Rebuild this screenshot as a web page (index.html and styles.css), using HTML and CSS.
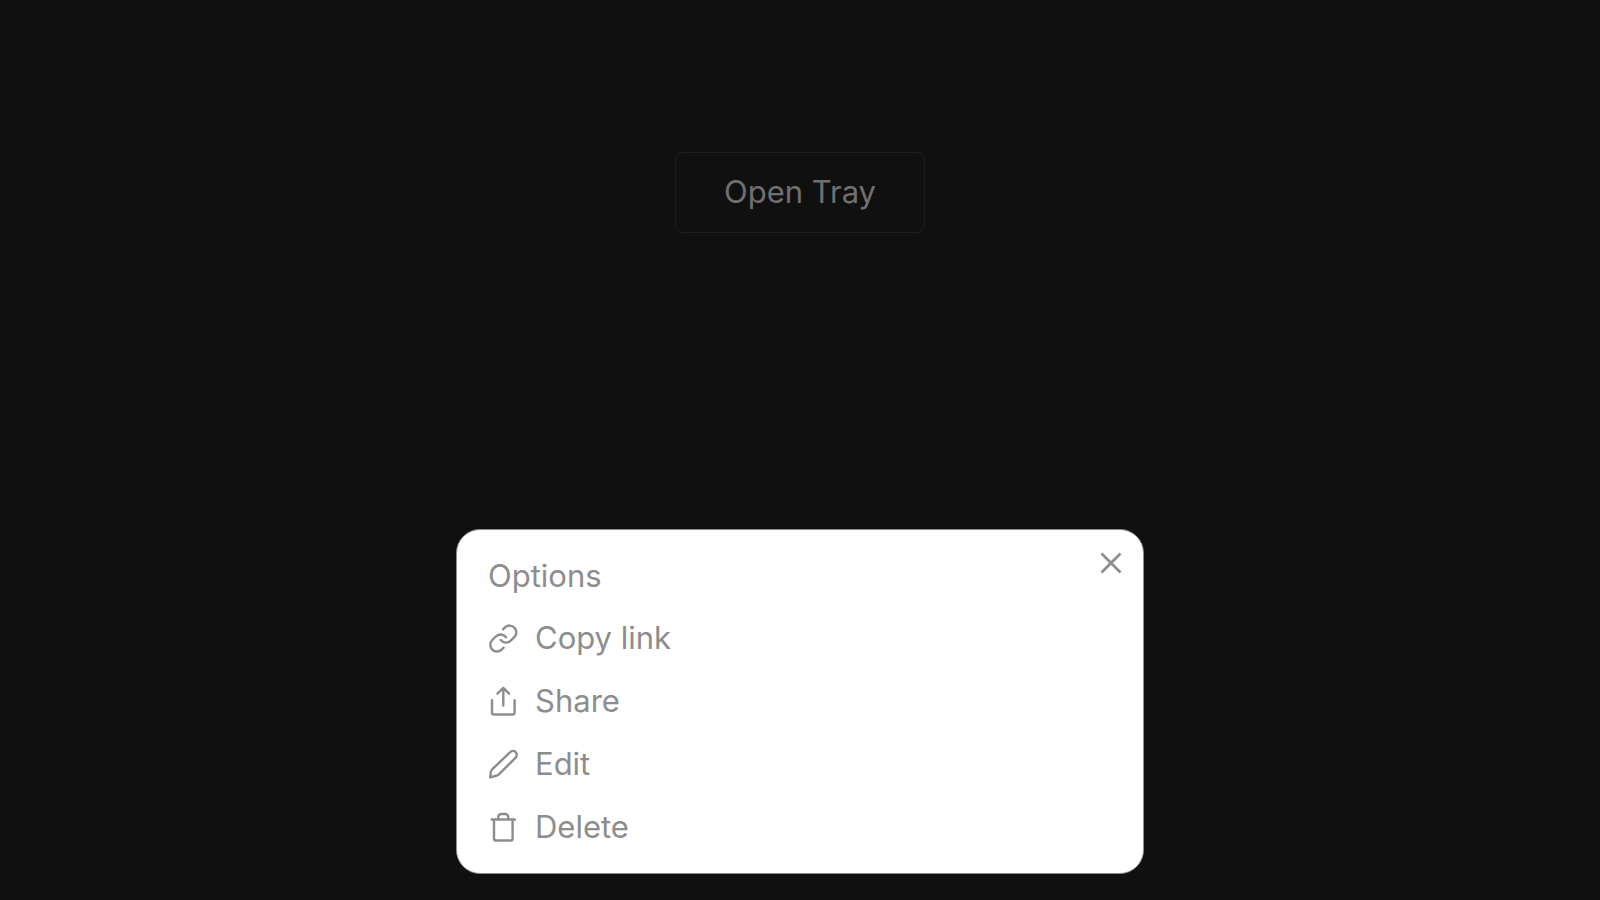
FILE: index.html
```html
<!DOCTYPE html>
<html lang="en">
<head>
<meta charset="utf-8">
<meta name="viewport" content="width=device-width, initial-scale=1">
<title>Tray</title>
<link rel="stylesheet" href="styles.css">
</head>
<body>
<main class="page">
  <button class="open-button" type="button">Open Tray</button>
</main>
<section class="tray" role="dialog" aria-labelledby="tray-title">
  <button class="close" type="button" aria-label="Close">
    <svg class="close-icon" viewBox="0 0 22 22" aria-hidden="true"><path d="M1.5 1.5l19 19M20.5 1.5l-19 19"/></svg>
  </button>
  <h2 class="title" id="tray-title">Options</h2>
  <ul class="actions">
    <li><button class="action" type="button">
      <svg class="icon" viewBox="0 0 31 31" aria-hidden="true"><path d="M12.600 16.900a6.750 6.750 0 0 0 10.200.7l4-4a6.750 6.750 0 0 0-9.500-9.500l-2.300 2.300M18 14.200a6.750 6.750 0 0 0-10.200-.7l-4 4a6.750 6.750 0 0 0 9.500 9.500l2.300-2.300"/></svg>
      Copy link</button></li>
    <li><button class="action" type="button">
      <svg class="icon" viewBox="0 0 31 31" aria-hidden="true"><path d="M15.300 19.500V2M9.500 7.600l5.800-5.800 5.800 5.800M4 14.200v12.300a2 2 0 0 0 2 2h18.600a2 2 0 0 0 2-2V14.200"/></svg>
      Share</button></li>
    <li><button class="action" type="button">
      <svg class="icon" viewBox="0 0 31 31" aria-hidden="true"><path d="M22.200 3.200a3.800 3.800 0 0 1 5.500 5.400L11.400 24.800q-1.600 1.600-4 2.200l-5.200 1.400.6-5.400q.3-1.600 1.600-2.900z"/></svg>
      Edit</button></li>
    <li><button class="action" type="button">
      <svg class="icon" viewBox="0 0 31 31" aria-hidden="true"><path d="M3.600 7.500h23.200M10.200 7.500V5a3 3 0 0 1 3-3h4a3 3 0 0 1 3 3v2.500M6 7.500v19a2 2 0 0 0 2 2h14.600a2 2 0 0 0 2-2v-19"/></svg>
      Delete</button></li>
  </ul>
</section>
</body>
</html>
```
FILE: styles.css
```css
* { box-sizing: border-box; }
body {
  margin: 0;
  min-height: 100vh;
  background: #101010;
  color: #8d8d8d;
  font: 400 31px/38px Inter, sans-serif;
}
button {
  margin: 0;
  padding: 0;
  border: 0;
  background: none;
  color: inherit;
  font: inherit;
  cursor: pointer;
}
.page {
  display: flex;
  justify-content: center;
  padding: 152px 24px 0;
}
.open-button {
  padding: 20px 48px 21px;
  border: 1px solid #1e1e1e;
  border-radius: 8px;
  color: #707070;
}
.tray {
  position: fixed;
  right: 0;
  bottom: 26px;
  left: 0;
  width: calc(100% - 48px);
  max-width: 688px;
  margin: 0 auto;
  padding: 27px 31px;
  border: 1px solid #8d8d8d;
  border-radius: 24px;
  background: #fff;
}
.title {
  margin: 0 0 24px;
  font: inherit;
}
.actions {
  display: grid;
  gap: 25px;
  margin: 0;
  padding: 0;
  list-style: none;
}
.action {
  display: flex;
  align-items: center;
  gap: 16px;
  width: 100%;
  text-align: left;
}
.icon, .close-icon {
  flex: none;
  width: 31px;
  height: 31px;
  fill: none;
  stroke: currentColor;
  stroke-width: 2.4;
  stroke-linecap: round;
  stroke-linejoin: round;
}
.close {
  position: absolute;
  top: 17px;
  right: 16px;
  display: grid;
  place-items: center;
  width: 32px;
  height: 32px;
}
.close-icon {
  width: 22px;
  height: 22px;
  stroke-linecap: butt;
  stroke-width: 2.8;
}
```
